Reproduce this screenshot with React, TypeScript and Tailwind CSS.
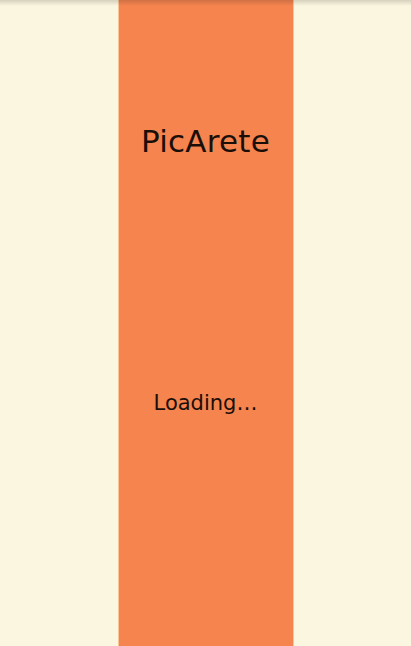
export default function App() {
  return (
    <div className="relative flex h-[646px] w-full justify-center bg-[#fbf6df] font-['DejaVu_Sans',sans-serif] text-[#1a0f08]">
      {/* soft shadow from the top edge */}
      <div className="pointer-events-none absolute inset-x-0 top-0 h-[6px] bg-gradient-to-b from-black/15 to-transparent" />
      <div className="flex h-full w-[176px] flex-col items-center border-x border-[#fbc59a] bg-[#f5844f]">
        <h1 className="mt-[126px] text-[31px] leading-none tracking-[0.2px]">PicArete</h1>
        <p className="mt-[236px] text-[21px] leading-none">Loading…</p>
      </div>
    </div>
  );
}
